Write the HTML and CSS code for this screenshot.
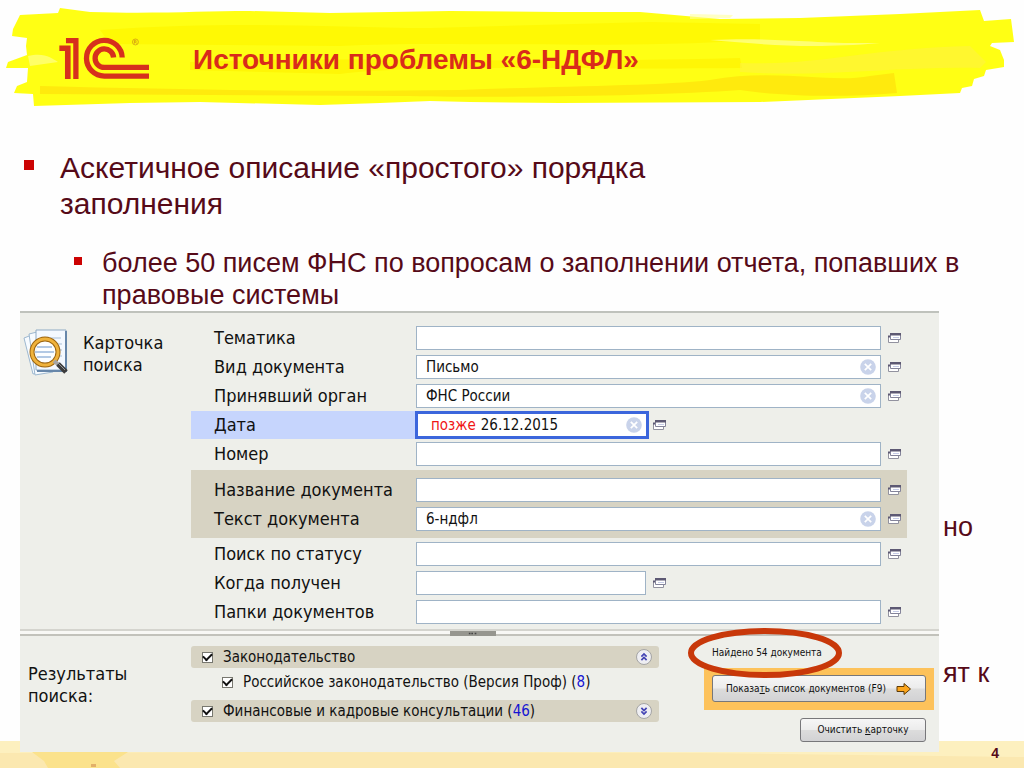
FILE: index.html
```html
<!DOCTYPE html>
<html lang="ru">
<head>
<meta charset="utf-8">
<meta name="viewport" content="width=device-width, initial-scale=1">
<title>Источники проблемы «6-НДФЛ»</title>
<link rel="stylesheet" href="styles.css">
</head>
<body>
<svg class="sprite" aria-hidden="true">
  <symbol id="windows" viewBox="0 0 14 12">
    <path d="M.5 4.500h10v6H.5z" fill="#fff" stroke="#92929f"/>
    <path d="M0 3.500h2v2H0z" fill="#5d5973"/>
    <path d="M2.500 1.500h10v6h-10z" fill="#fff" stroke="#84849a"/>
    <path d="M2 1h11v2.500H2z" fill="#5d5973"/>
    <path d="M5 5.500h6" stroke="#c5cbe6"/>
  </symbol>
  <symbol id="clear" viewBox="0 0 16 16">
    <circle cx="8" cy="8" r="7.800" fill="#c9d3ea"/>
    <path d="M4.800 4.800l6.400 6.400M11.200 4.800l-6.400 6.400" stroke="#fff" stroke-width="1.700"/>
  </symbol>
</svg>
<div class="slide">
  <header class="header">
    <svg class="brush" viewBox="0 0 1024 112" preserveAspectRatio="none" aria-hidden="true">
      <path fill="#ffff14" d="M20 15L58 13 60 8 90 12C160 14 200 11 250 11L330 13 450 11 560 12 640 12 720 19 800 18 900 14 980 10 984 21 1011 19 1014 42 992 43 990 46 1000 50 1004 60 1004 67 986 70 984 76 974 79 972 86 962 88 960 93 900 96 760 102 560 103 470 102 430 101 380 103 320 105 200 102 130 103 34 106 33 94 14 93 17 86 27 82 28 68 6 68 8 62 27 55 26 46 27 38 12 36 13 29Z"/>
      <path fill="#fff700" opacity=".8" d="M100 30C250 20 330 28 430 28L650 22 760 24 760 40C600 50 450 40 340 46L110 44Z"/>
      <path fill="#fff200" opacity=".7" d="M190 62C340 56 500 64 740 58L742 68C560 70 420 64 340 74L190 70Z"/>
      <path fill="#fff04a" opacity=".5" d="M740 63C820 66 870 48 970 46L986 62 980 68C900 66 820 78 740 72Z"/>
      <path fill="#ffe60c" opacity=".85" d="M40 86C200 90 320 92 460 90 560 86 660 86 710 80 780 68 830 84 870 76L894 73 897 93C840 98 780 96 740 90 660 96 500 98 400 96L40 94Z"/>
      <path fill="#ffff8a" opacity=".8" d="M710 40C780 37 810 44 880 43 810 49 770 45 710 40Z"/>
      <path fill="#ffff9e" opacity=".6" d="M28 56C44 52 52 58 58 62L30 66ZM690 14L733 15 730 18 690 19Z"/>
    </svg>
    <svg class="logo" viewBox="177 110 273 130" role="img" aria-label="1С">
      <g fill="#d6301d">
        <path d="M197 113H235V237H219V129H197Z"/>
        <path d="M177 136H211V237H194V152H177Z"/>
      </g>
      <g fill="none" stroke="#d6301d" stroke-width="16">
        <path d="M367 172A54 54 0 1 0 313 228H448"/>
        <path d="M341 172A28 28 0 1 0 313 202H448"/>
      </g>
      <circle cx="407" cy="125" r="9" fill="none" stroke="#c98a1a" stroke-width="2"/>
      <path d="M404 130V120H408Q411 123 408 125H404M407 125L411 130" fill="none" stroke="#c98a1a" stroke-width="2"/>
    </svg>
    <h1 class="title">Источники проблемы «6-НДФЛ»</h1>
  </header>

  <main class="main">
    <ul class="points">
      <li class="point">Аскетичное описание «простого» порядка<br>заполнения
        <ul class="subpoints">
          <li class="subpoint">более 50 писем ФНС по вопросам о заполнении отчета, попавших в правовые системы</li>
        </ul>
      </li>
    </ul>

    <div class="board">
      <form class="panel">
        <section class="search">
          <div class="caption">
            <svg class="search-icon" viewBox="0 0 48 50" aria-hidden="true">
              <path d="M1 10L14 5 26 42 10 46Z" fill="#f7fbff" stroke="#9db8d0"/>
              <path d="M6 6L18 3 30 44 12 47Z" fill="#f7fbff" stroke="#9db8d0"/>
              <path d="M13 2H43V42H13Z" fill="#f4f9ff" stroke="#8faac4"/>
              <path d="M43 3V43H14" fill="none" stroke="#6787aa" stroke-width="2"/>
              <path d="M27 10H38M34 16H39M34 22H39M34 28H39" stroke="#a9bfd7"/>
              <circle cx="22" cy="24" r="13" fill="#fff" fill-opacity=".8" stroke="#9c6511" stroke-width="5"/>
              <circle cx="22" cy="24" r="13" fill="none" stroke="#efb23c" stroke-width="3"/>
              <path d="M14 19H29M12 24H31M14 29H28" stroke="#b3c9e4" stroke-width="2"/>
              <path d="M31 33L36 37" stroke="#a5a5a5" stroke-width="4"/>
              <path d="M35 36L43 44" stroke="#3c3c3c" stroke-width="5"/>
              <path d="M35 35L42 42" stroke="#999" stroke-width="1"/>
            </svg>
            <span>Карточка<br>поиска</span>
          </div>
          <div class="fields">
            <div class="row"><label for="topic">Тематика</label><div class="field"><input id="topic" type="text"></div><button class="pick" type="button" aria-label="Выбрать тематику"><svg><use href="#windows"/></svg></button></div>
            <div class="row"><label for="kind">Вид документа</label><div class="field"><input id="kind" type="text" value="Письмо"><button class="clear" type="button" aria-label="Стереть"><svg><use href="#clear"/></svg></button></div><button class="pick" type="button" aria-label="Выбрать вид"><svg><use href="#windows"/></svg></button></div>
            <div class="row"><label for="organ">Принявший орган</label><div class="field"><input id="organ" type="text" value="ФНС России"><button class="clear" type="button" aria-label="Стереть"><svg><use href="#clear"/></svg></button></div><button class="pick" type="button" aria-label="Выбрать орган"><svg><use href="#windows"/></svg></button></div>
            <div class="row active"><label for="date">Дата</label><div class="field short"><span class="later">позже</span><input id="date" type="text" value="26.12.2015"><button class="clear" type="button" aria-label="Стереть"><svg><use href="#clear"/></svg></button></div><button class="pick" type="button" aria-label="Выбрать дату"><svg><use href="#windows"/></svg></button></div>
            <div class="row"><label for="number">Номер</label><div class="field"><input id="number" type="text"></div><button class="pick" type="button" aria-label="Выбрать номер"><svg><use href="#windows"/></svg></button></div>
            <div class="group">
              <div class="row"><label for="name">Название документа</label><div class="field"><input id="name" type="text"></div><button class="pick" type="button" aria-label="Выбрать название"><svg><use href="#windows"/></svg></button></div>
              <div class="row"><label for="text">Текст документа</label><div class="field"><input id="text" type="text" value="6-ндфл"><button class="clear" type="button" aria-label="Стереть"><svg><use href="#clear"/></svg></button></div><button class="pick" type="button" aria-label="Выбрать текст"><svg><use href="#windows"/></svg></button></div>
            </div>
            <div class="row"><label for="status">Поиск по статусу</label><div class="field"><input id="status" type="text"></div><button class="pick" type="button" aria-label="Выбрать статус"><svg><use href="#windows"/></svg></button></div>
            <div class="row"><label for="received">Когда получен</label><div class="field short"><input id="received" type="text"></div><button class="pick" type="button" aria-label="Выбрать период"><svg><use href="#windows"/></svg></button></div>
            <div class="row"><label for="folders">Папки документов</label><div class="field"><input id="folders" type="text"></div><button class="pick" type="button" aria-label="Выбрать папку"><svg><use href="#windows"/></svg></button></div>
          </div>
        </section>

        <div class="splitter"><span class="grip"><svg viewBox="0 0 46 6"><path d="M18 2h2v2h-2zM21 2h2v2h-2zM25 2h2v2h-2z" fill="#444"/></svg></span></div>

        <section class="results">
          <h2 class="results-title">Результаты<br>поиска:</h2>
          <div class="bases">
            <div class="base bar">
              <label><input type="checkbox" checked><span>Законодательство</span></label>
              <button class="fold" type="button" aria-label="Свернуть"><svg viewBox="0 0 16 16"><path d="M5 7.500l3-3 3 3M5 11.500l3-3 3 3"/></svg></button>
            </div>
            <div class="base nested">
              <label><input type="checkbox" checked><span>Российское законодательство (Версия Проф) (<b>8</b>)</span></label>
            </div>
            <div class="base bar">
              <label><input type="checkbox" checked><span>Финансовые и кадровые консультации (<b>46</b>)</span></label>
              <button class="fold" type="button" aria-label="Развернуть"><svg viewBox="0 0 16 16"><path d="M5 4.500l3 3 3-3M5 8.500l3 3 3-3"/></svg></button>
            </div>
          </div>
          <div class="actions">
            <p class="found">Найдено 54 документа
              <svg class="ring" viewBox="0 0 156 52" aria-hidden="true"><ellipse cx="78" cy="26" rx="74" ry="22" fill="none" stroke="#c8380a" stroke-width="6"/></svg>
            </p>
            <div class="frame">
              <button class="btn" type="button"><span>Показа<u>т</u>ь список документов (F9)</span><svg viewBox="0 0 16 14"><path d="M1 4.500H8V1.500L14.500 7 8 12.500V9.500H1Z" fill="#fba51c" stroke="#5c3b08"/></svg></button>
            </div>
            <button class="btn reset" type="button"><span>Очистить <u>к</u>арточку</span></button>
          </div>
        </section>
      </form>
      <div class="rest">
        <span>но</span>
        <span>ят к</span>
      </div>
    </div>
  </main>

  <footer class="footer">
    <svg class="stain" viewBox="0 0 1024 27" preserveAspectRatio="none" aria-hidden="true">
      <path fill="#fbe8b0" d="M0 12L270 11 700 12 1024 16V27H0Z"/>
      <path fill="#fbe28c" d="M32 11H128L114 20 120 27H48L44 20Z"/>
      <path fill="#e2b06a" d="M91 23h5v3h-5z"/>
    </svg>
    <span class="page">4</span>
  </footer>
</div>
</body>
</html>
```
FILE: styles.css
```css
* { box-sizing: border-box; }

body {
  margin: 0;
  background: #fefefe;
  color: #560a18;
  font-family: "Liberation Sans", Arial, sans-serif;
}

.sprite { display: none; }

.slide {
  min-height: 100vh;
  display: flex;
  flex-direction: column;
}

.header {
  position: relative;
  display: flex;
  align-items: center;
  gap: 43px;
  min-height: 112px;
  padding: 4px 59px 0;
}

.brush {
  position: absolute;
  inset: 0;
  width: 100%;
  height: 100%;
}

.logo {
  position: relative;
  width: 91px;
  height: 43px;
}

.title {
  position: relative;
  margin: 0;
  padding-top: 4px;
  color: #d92b1b;
  font-size: 28px;
  line-height: 32px;
}

.main { flex: 1; }

.points,
.subpoints {
  margin: 0;
  padding: 0;
  list-style: none;
}

.points {
  padding: 38px 24px 0;
  font-size: 30px;
  line-height: 36px;
}

.point,
.subpoint {
  position: relative;
  padding-left: 36px;
}

.point::before,
.subpoint::before {
  content: "";
  position: absolute;
  left: 0;
  top: 10px;
  width: 10px;
  height: 10px;
  background: #cc0303;
}

.subpoints { margin-top: 25px; }

.subpoint {
  margin-left: 14px;
  padding-left: 28px;
  font-size: 27px;
  line-height: 32px;
}

.subpoint::before {
  width: 8px;
  height: 8px;
}

.board {
  display: flex;
  padding-left: 20px;
}

.panel {
  position: relative;
  z-index: 1;
  flex: 1;
  margin-bottom: -11px;
  border-top: 2px solid #bfc2bc;
  background: #eeefea;
  color: #111;
  font-family: "DejaVu Sans Condensed", "Noto Sans", sans-serif;
  font-size: 18px;
  line-height: 22px;
}

.rest {
  display: flex;
  flex-direction: column;
  gap: 114px;
  width: 85px;
  padding: 200px 0 0 4px;
  font-size: 27px;
  line-height: 32px;
}

.search {
  display: flex;
  padding: 10px 32px 3px 0;
}

.caption {
  display: flex;
  gap: 12px;
  width: 171px;
  padding: 5px 0 0 3px;
}

.caption span { padding-top: 4px; }

.search-icon {
  width: 48px;
  height: 50px;
}

.fields { flex: 1; }

.row {
  display: flex;
  align-items: center;
  height: 29px;
}

.row label {
  width: 225px;
  padding-left: 23px;
  line-height: 28px;
}

.field {
  display: flex;
  flex: 1;
  align-items: center;
  height: 24px;
  padding: 0 4px 0 9px;
  border: 1px solid #9fb3c6;
  background: #fff;
  font-size: 15px;
}

.field input {
  flex: 1;
  width: 0;
  min-width: 0;
  padding: 0;
  border: 0;
  outline: 0;
  background: none;
  color: #111;
  font: inherit;
}

.field.short { flex: 0 0 230px; }

.active label {
  margin-right: -1px;
  background: #c6d5fd;
}

.active .field.short {
  flex-basis: 234px;
  height: 28px;
  gap: 5px;
  margin-right: -3px;
  padding-left: 13px;
  border: 3px solid #3c66dc;
}

.later { color: #f01515; }

button {
  margin: 0;
  padding: 0;
  border: 0;
  background: none;
  color: inherit;
  font: inherit;
}

.clear,
.clear svg {
  display: block;
  width: 16px;
  height: 16px;
}

.pick { margin: 0 5px 0 7px; }

.pick,
.pick svg {
  display: block;
  width: 14px;
  height: 12px;
}

.group {
  margin: 2px 0 1px;
  padding: 5px 0;
  background: #d7d3c3;
}

.splitter {
  display: flex;
  justify-content: center;
  height: 7px;
  padding-right: 14px;
  border-top: 2px solid #d4d4ce;
  border-bottom: 2px solid #c2c2bb;
  background: #f8f8f5;
}

.grip {
  width: 46px;
  height: 5px;
  background: #96968f;
}

.grip svg {
  display: block;
  width: 46px;
  height: 5px;
}

.results {
  display: flex;
  padding: 10px 5px 10px 8px;
}

.results-title {
  width: 163px;
  margin: 0;
  padding-top: 17px;
  font-size: 18px;
  font-weight: 400;
}

.bases {
  flex: 1;
  font-size: 15px;
}

.base {
  display: flex;
  align-items: center;
  justify-content: space-between;
  height: 22px;
  padding: 0 7px 0 11px;
}

.bar {
  border-radius: 3px;
  background: #d7d3c3;
}

.nested {
  height: 32px;
  padding: 0 0 4px 31px;
}

.base label {
  display: flex;
  align-items: center;
  gap: 10px;
  white-space: nowrap;
}

.base b {
  color: #1414d2;
  font-weight: 400;
}

.base input {
  appearance: none;
  display: grid;
  place-items: center;
  width: 11px;
  height: 11px;
  margin: 0;
  border: 1px solid #77776f;
  background: #fff;
}

.base input:checked::before {
  content: "";
  width: 7px;
  height: 4px;
  margin-bottom: 2px;
  border: solid #111;
  border-width: 0 0 2px 2px;
  transform: rotate(-45deg);
}

.fold svg {
  display: block;
  width: 16px;
  height: 16px;
  border: 1px solid #a5a5a5;
  border-radius: 8px;
  background: #eeeef2;
  fill: none;
  stroke: #4444b4;
  stroke-width: 2;
}

.actions {
  display: flex;
  flex-direction: column;
  align-items: flex-end;
  width: 230px;
  margin-left: 45px;
  font-size: 10px;
}

.found {
  position: relative;
  align-self: stretch;
  margin: 0;
  padding: 0 8px;
  line-height: 14px;
}

.ring {
  position: absolute;
  left: -17px;
  top: -19px;
  z-index: 1;
  width: 156px;
  height: 52px;
}

.frame {
  align-self: stretch;
  margin: 8px 0;
  padding: 7px 8px 8px;
  background: #fdc25b;
}

.btn {
  display: flex;
  align-items: center;
  justify-content: center;
  gap: 10px;
  height: 24px;
  border: 1px solid #77777a;
  border-radius: 3px;
  background: linear-gradient(#f6f6f6, #ececec 48%, #dcdcdc 52%, #d2d2d4);
  color: #111;
  white-space: nowrap;
}

.frame .btn {
  width: 100%;
  height: 27px;
}

.btn svg {
  width: 16px;
  height: 14px;
}

.reset {
  width: 126px;
  margin-right: 8px;
}

.footer {
  position: relative;
  display: flex;
  align-items: center;
  justify-content: flex-end;
  height: 27px;
  padding: 0 25px 4px 0;
  background: #fdf0bf;
}

.stain {
  position: absolute;
  inset: 0;
  width: 100%;
  height: 100%;
}

.page {
  position: relative;
  font-size: 14px;
  font-weight: 700;
}
```
